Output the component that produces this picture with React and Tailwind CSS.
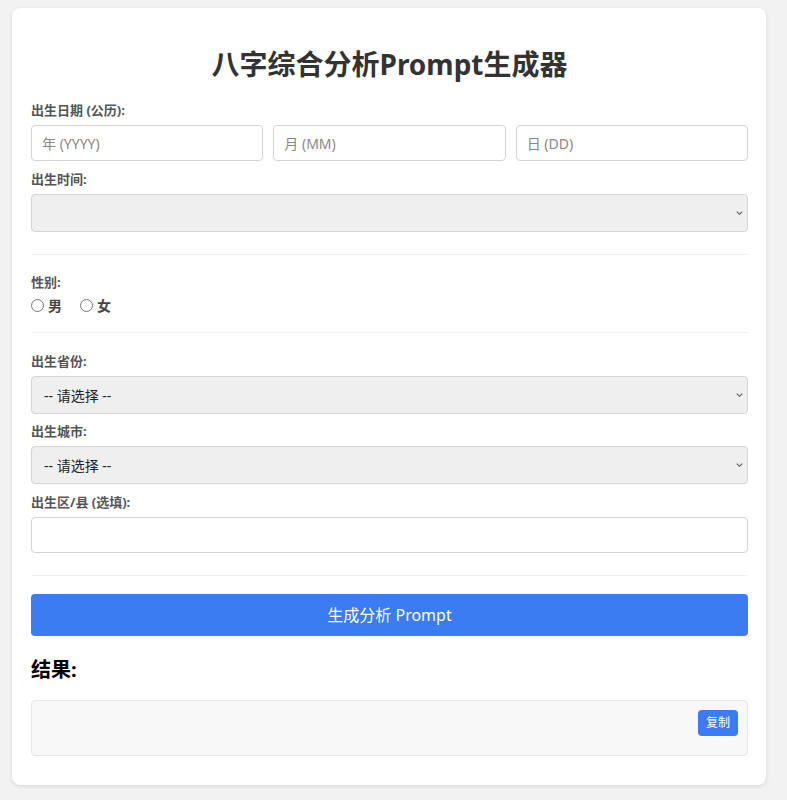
const font = { fontFamily: '"Noto Sans", "Noto Sans CJK SC", sans-serif' };

const labelCls = 'block text-[13px] font-bold text-[#555] leading-[18px] mb-[6px]';
const inputCls = 'h-[36px] w-full rounded-[4px] border border-[#d4d4d4] bg-white px-[10px] text-[14px] text-[#333] placeholder:text-[#888] outline-none';

const Chevron = () => (
  <svg className="pointer-events-none absolute right-[4px] top-1/2 -translate-y-1/2 w-[9px] h-[9px] text-[#555]" viewBox="0 0 10 10" fill="none" stroke="currentColor" strokeWidth="1.2">
    <path d="M2 3.5l3 3 3-3" />
  </svg>
);

const Select = ({ children }) => (
  <div className="relative">
    <select className="h-[38px] w-full appearance-none rounded-[4px] border border-[#d4d4d4] bg-[#efefef] px-[12px] text-[14px] text-[#222] outline-none">
      {children}
    </select>
    <Chevron />
  </div>
);

const Divider = () => <div className="h-px bg-[#f0f0f0]" />;

const App = () => (
  <div className="min-h-[800px] bg-[#f2f2f2] pl-[12px] pr-[21px] pt-[8px] pb-[14px]" style={font}>
    <div className="rounded-[8px] bg-white pl-[19px] pr-[18px] pt-[38px] pb-[29px] shadow-[0_1px_4px_rgba(0,0,0,0.12)]">
      <h1 className="text-center text-[28px] font-bold leading-[36px] text-[#333]">八字综合分析Prompt生成器</h1>

      <div className="mt-[19px]">
        <label className={labelCls}>出生日期 (公历):</label>
        <div className="grid grid-cols-3 gap-[10px]">
          <input className={inputCls} placeholder="年 (YYYY)" />
          <input className={inputCls} placeholder="月 (MM)" />
          <input className={inputCls} placeholder="日 (DD)" />
        </div>
      </div>

      <div className="mt-[9px]">
        <label className={labelCls}>出生时间:</label>
        <Select>
          <option></option>
        </Select>
      </div>

      <div className="mt-[22px]">
        <Divider />
      </div>

      <div className="mt-[18px]">
        <label className={`${labelCls} !mb-[4px]`}>性别:</label>
        <div className="flex items-center gap-[18px] text-[14px] font-bold text-[#444]">
          <label className="flex items-center gap-[4px]">
            <span className="inline-block w-[13px] h-[13px] rounded-full border border-[#777] bg-white" />
            男
          </label>
          <label className="flex items-center gap-[4px]">
            <span className="inline-block w-[13px] h-[13px] rounded-full border border-[#777] bg-white" />
            女
          </label>
        </div>
      </div>

      <div className="mt-[16px]">
        <Divider />
      </div>

      <div className="mt-[19px]">
        <label className={labelCls}>出生省份:</label>
        <Select>
          <option>-- 请选择 --</option>
        </Select>
      </div>

      <div className="mt-[8px]">
        <label className={labelCls}>出生城市:</label>
        <Select>
          <option>-- 请选择 --</option>
        </Select>
      </div>

      <div className="mt-[9px]">
        <label className={labelCls}>出生区/县 (选填):</label>
        <input className={inputCls} />
      </div>

      <div className="mt-[22px]">
        <Divider />
      </div>

      <button className="mt-[18px] h-[42px] w-full rounded-[4px] bg-[#3a7cf2] text-[16px] text-white">生成分析 Prompt</button>

      <h2 className="mt-[20px] text-[20px] font-bold leading-[28px] text-black">结果:</h2>

      <div className="mt-[16px] flex h-[56px] justify-end rounded-[4px] border border-[#e6e6e6] bg-[#f8f8f8] pt-[9px] pr-[9px]">
        <button className="h-[26px] rounded-[4px] bg-[#3a7cf2] px-[8px] text-[12px] leading-[26px] text-white">复制</button>
      </div>
    </div>
  </div>
);

export default App;
